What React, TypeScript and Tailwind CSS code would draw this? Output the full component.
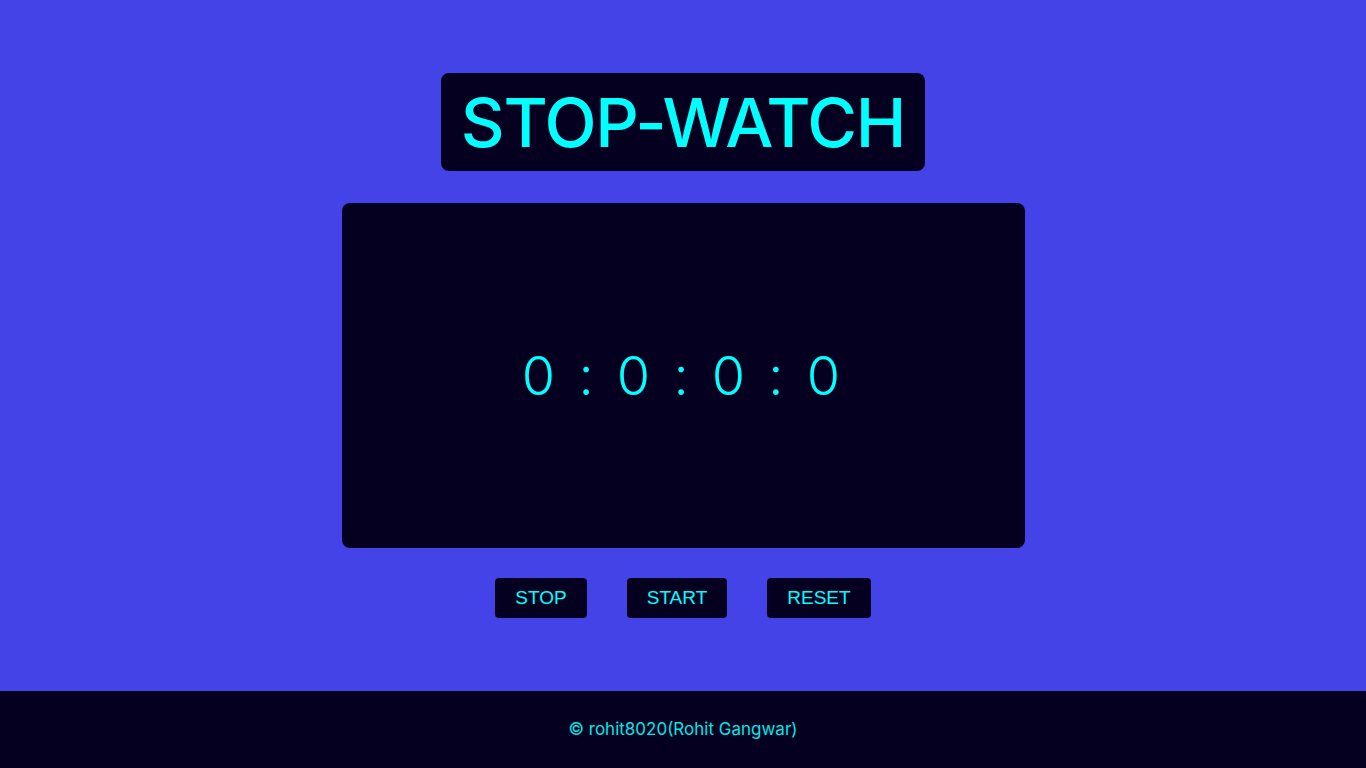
import React, { useEffect, useRef, useState } from 'react';

const font = { fontFamily: '"Inter", "Noto Sans", sans-serif' };

export default function App() {
  const [time, setTime] = useState({ h: 0, m: 0, s: 0, ms: 0 });
  const timer = useRef<number | null>(null);

  const start = () => {
    if (timer.current) return;
    timer.current = window.setInterval(() => {
      setTime((t) => {
        let { h, m, s, ms } = t;
        ms += 1;
        if (ms === 100) { ms = 0; s += 1; }
        if (s === 60) { s = 0; m += 1; }
        if (m === 60) { m = 0; h += 1; }
        return { h, m, s, ms };
      });
    }, 10);
  };

  const stop = () => {
    if (timer.current) window.clearInterval(timer.current);
    timer.current = null;
  };

  const reset = () => {
    stop();
    setTime({ h: 0, m: 0, s: 0, ms: 0 });
  };

  useEffect(() => () => stop(), []);

  return (
    <div className="min-h-screen flex flex-col bg-[#4443e8]" style={font}>
      <main className="flex-1 flex flex-col items-center pt-[73px]">
        <h1 className="bg-[#05001f] text-[#00ffff] rounded-lg px-5 h-[98px] flex items-center text-[68px] font-medium leading-none tracking-[-1.3px]">
          STOP-WATCH
        </h1>

        <div className="mt-8 w-[683px] h-[345px] bg-[#05001f] rounded-lg flex items-center justify-center">
          <span className="text-[#00ffff] text-[54px] font-light tracking-[4px]">
            {time.h} : {time.m} : {time.s} : {time.ms}
          </span>
        </div>

        <div className="mt-[30px] flex gap-10" style={{ fontFamily: '"Liberation Sans", Arial, sans-serif' }}>
          <button onClick={stop} className="bg-[#05001f] text-[#00ffff] rounded h-10 px-5 pt-px text-[19px]">STOP</button>
          <button onClick={start} className="bg-[#05001f] text-[#00ffff] rounded h-10 px-5 pt-px text-[19px]">START</button>
          <button onClick={reset} className="bg-[#05001f] text-[#00ffff] rounded h-10 px-5 pt-px text-[19px]">RESET</button>
        </div>
      </main>

      <footer className="h-[77px] bg-[#05001f] flex items-center justify-center text-[#00e8e8] text-[17px]">
        © rohit8020(Rohit Gangwar)
      </footer>
    </div>
  );
}
